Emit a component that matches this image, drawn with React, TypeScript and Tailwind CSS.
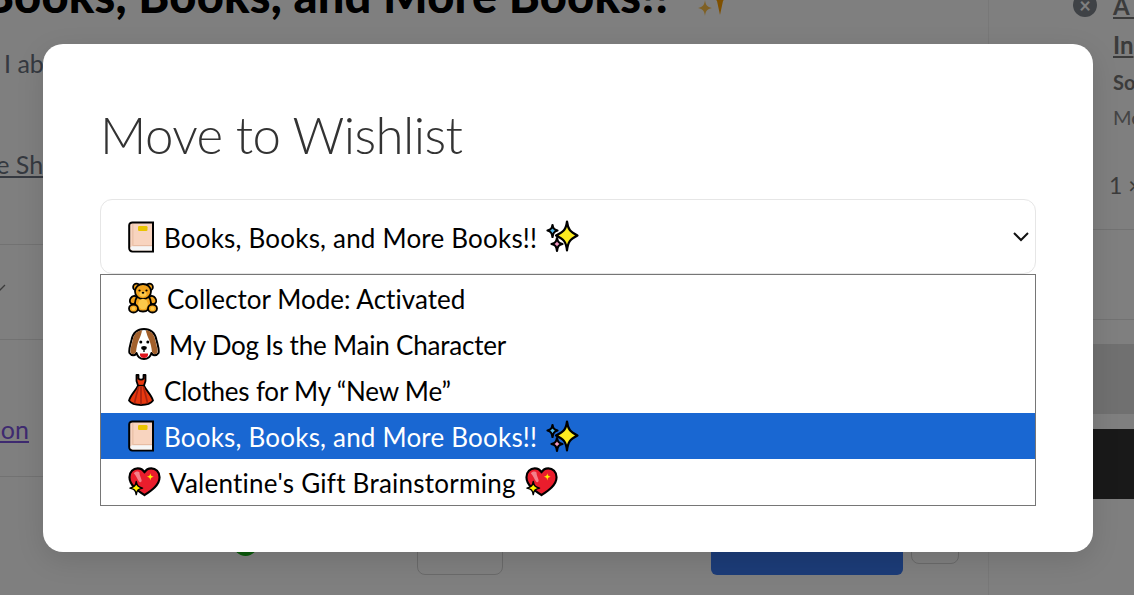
import React from "react";

const Book = () => (
  <svg viewBox="0 0 26 32" className="w-[26px] h-[32px] shrink-0">
    <path d="M4.500 1.500H25V30.500H4.500C2.500 30.500 1.200 29 1.200 27V4.500C1.200 2.700 2.500 1.500 4.500 1.500Z" fill="#f8d4bf" stroke="#000" strokeWidth="2" />
    <path d="M5 25H24V29.500H5C3.500 29.500 2.300 28.500 2.300 27.300C2.300 26 3.500 25 5 25Z" fill="#f6f6f6" />
    <path d="M24 24.700H4.500" stroke="#dcae94" strokeWidth="0.800" />
    <path d="M4.800 3V24.500" stroke="#ecc4ac" strokeWidth="1.600" />
    <rect x="10" y="5" width="9.500" height="5" rx="1.300" fill="#e9c400" />
  </svg>
);

const Sparkles = () => (
  <svg viewBox="0 0 33 33" className="w-[33px] h-[33px] shrink-0">
    <path d="M6.500 5C7 8.500 8 9.500 11.500 10.500C8 11.500 7 13 6.500 17C6 13 5 11.500 1.500 10.500C5 9.500 6 8.500 6.500 5Z" fill="#52b9ec" stroke="#000" strokeWidth="2.200" strokeLinejoin="round" />
    <path d="M21 1.500C22 9.500 24 11.500 31.500 15.500C24 19.500 22 21.500 21 30.500C20 21.500 18 19.500 10 15.500C18 11.500 20 9.500 21 1.500Z" fill="#fcec20" stroke="#000" strokeWidth="2.200" strokeLinejoin="round" />
    <path d="M11 18C11.500 21.500 12.500 23 16.500 24C12.500 25 11.500 26.500 11 31C10.500 26.500 9.500 25 5.500 24C9.500 23 10.500 21.500 11 18Z" fill="#f29ac4" stroke="#000" strokeWidth="2.200" strokeLinejoin="round" />
  </svg>
);

const Teddy = () => (
  <svg viewBox="0 0 30 32" className="w-[30px] h-[32px] shrink-0">
    <g stroke="#000" strokeWidth="1.800" fill="#f2a31c">
      <circle cx="8.500" cy="5" r="3.400" />
      <circle cx="21.500" cy="5" r="3.400" />
      <ellipse cx="5.500" cy="18" rx="3.300" ry="4.300" transform="rotate(35 5.500 18)" />
      <ellipse cx="24.500" cy="18" rx="3.300" ry="4.300" transform="rotate(-35 24.500 18)" />
      <ellipse cx="15" cy="21" rx="8" ry="8.500" />
      <ellipse cx="5.500" cy="26.500" rx="4.500" ry="4" />
      <ellipse cx="24.500" cy="26.500" rx="4.500" ry="4" />
      <ellipse cx="15" cy="9.500" rx="8" ry="7.500" />
    </g>
    <ellipse cx="15" cy="22" rx="4.800" ry="5.200" fill="#fcc94a" />
    <ellipse cx="15" cy="12" rx="3.600" ry="2.800" fill="#fcc94a" />
    <circle cx="11.500" cy="8.500" r="1.100" fill="#000" />
    <circle cx="18.500" cy="8.500" r="1.100" fill="#000" />
    <ellipse cx="15" cy="10.800" rx="1.300" ry="1" fill="#000" />
    <circle cx="5.500" cy="26.500" r="2" fill="#fcc94a" />
    <circle cx="24.500" cy="26.500" r="2" fill="#fcc94a" />
  </svg>
);

const Dog = () => (
  <svg viewBox="0 0 32 32" className="w-[32px] h-[32px] shrink-0">
    <path d="M16 1C23 1 27 5 28.500 12C30 18 31.500 22 30.500 25C28.500 28 25 28 23.500 25C22.500 28.500 19.500 31 16 31C12.500 31 9.500 28.500 8.500 25C7 28 3.500 28 1.500 25C0.500 22 2 18 3.500 12C5 5 9 1 16 1Z" fill="#fff" stroke="#000" strokeWidth="2" strokeLinejoin="round" />
    <path d="M14 2.200C8 3 5.500 7 4.500 13C3 19 2 22 2.700 24.800C4 26.800 7 26.500 8 24C8.500 19 9.500 15 11 11.500C12.500 8 13.500 6 14 2.200Z" fill="#a2602c" />
    <path d="M18 2.200C24 3 26.500 7 27.500 13C29 19 30 22 29.300 24.800C28 26.800 25 26.500 24 24C23.500 19 22.500 15 21 11.500C19.500 8 18.500 6 18 2.200Z" fill="#a2602c" />
    <path d="M18 2.500C24 3 25 9 24 13C22 12 20 8 18 2.500Z" fill="#a2602c" />
    <circle cx="12.800" cy="14" r="1.500" fill="#000" />
    <circle cx="19.800" cy="14" r="1.500" fill="#000" />
    <ellipse cx="16" cy="20" rx="2.800" ry="1.900" fill="#000" />
    <path d="M16 21V24" stroke="#000" strokeWidth="1.300" />
    <path d="M12 25.500H20V27C20 31 12 31 12 27Z" fill="#e0141c" />
  </svg>
);

const Dress = () => (
  <svg viewBox="0 0 26 32" className="w-[26px] h-[32px] shrink-0">
    <path d="M8.500 1V7L10 11.500C7.500 17 2.500 21 1 26.500C3 29.500 7.500 31 13 31C18.500 31 23 29.500 25 26.500C23.500 21 18.500 17 16 11.500L17.500 7V1H15.500V4.500C14.500 6 11.500 6 10.500 4.500V1Z" fill="#e8380f" stroke="#000" strokeWidth="1.800" strokeLinejoin="round" />
    <path d="M10.500 13C9 19 7.500 24 6.500 29.500M13 13V30.500M15.500 13C17 19 18.500 24 19.500 29.500" stroke="#a92410" strokeWidth="1.700" fill="none" />
    <path d="M10 11.500H16" stroke="#000" strokeWidth="1.300" />
  </svg>
);

const Heart = () => (
  <svg viewBox="0 0 34 32" className="w-[33px] h-[32px] shrink-0">
    <path d="M17 29.500C11 25.500 1.500 19.500 1.500 11C1.500 5.500 5.500 2 10 2C13 2 15.500 3.500 17 6C18.500 3.500 21 2 24 2C28.500 2 32.500 5.500 32.500 11C32.500 19.500 23 25.500 17 29.500Z" fill="#ea1d2c" stroke="#000" strokeWidth="2.200" strokeLinejoin="round" />
    <path d="M6 7C8 4.500 11 5 12 6.500C11.500 8 13 11 14 14C14.500 16.500 12 17 11 15C9.500 12.500 8.500 10 6 7Z" fill="#f4808a" />
    <path d="M23 7C23.500 9.500 24 10 26.500 10.500C24 11 23.500 11.500 23 14.500C22.500 11.500 22 11 19.500 10.500C22 10 22.500 9.500 23 7Z" fill="#fff000" />
    <path d="M8.500 15.500C9.300 20 10.500 21.300 15 22.300C10.500 23.300 9.300 24.500 8.500 29C7.700 24.500 6.500 23.300 2 22.300C6.500 21.300 7.700 20 8.500 15.500Z" fill="#fff000" stroke="#000" strokeWidth="1.500" strokeLinejoin="round" />
  </svg>
);

const items = [
  { icon: <Teddy />, label: "Collector Mode: Activated", text: "ml-[9px] tracking-[0.03px]" },
  { icon: <Dog />, label: "My Dog Is the Main Character", text: "ml-[9px] tracking-[-0.2px]" },
  { icon: <Dress />, label: "Clothes for My “New Me”", text: "ml-[10px] tracking-[-0.2px]" },
  { icon: <Book />, label: "Books, Books, and More Books!!", text: "ml-[10px] tracking-[0.2px]", tail: <Sparkles />, selected: true },
  { icon: <Heart />, label: "Valentine's Gift Brainstorming", text: "ml-[8px] tracking-[0.25px]", tail: <Heart /> },
];

export default function App() {
  return (
    <div className="relative h-[595px] w-[1134px] overflow-hidden bg-white font-['Lato','Noto_Sans',sans-serif]">
      <div className="flex h-[595px]">
        <div className="flex w-[989px] shrink-0 flex-col border-r border-[#f0f0f0]">
          <div className="h-[245px] shrink-0 border-b border-[#e5e5e5]">
            <div className="flex h-[44px] -ml-[17px] -mt-[27px] items-start whitespace-nowrap">
              <span className="self-center text-[47px] font-black leading-none tracking-[0.2px] text-black">Books, Books, and More Books!!</span>
              <svg viewBox="0 0 30 44" className="ml-[29px] h-[44px] w-[30px] shrink-0">
                <path d="M7 27C7.700 32 9 34 14 35C9 36 7.700 38 7 43C6.300 38 5 36 0 35C5 34 6.300 32 7 27Z" fill="#ffc24a" />
                <path d="M14 22H30L25 28C24 33 23 37 22 42C21 37 20 33 19 28Z" fill="#ffa000" />
              </svg>
            </div>
            <div className="ml-[4px] mt-[30px] whitespace-nowrap text-[25px] leading-8 text-[#6b7280]">I about this list</div>
            <div className="-ml-[53px] mt-[69px] whitespace-nowrap text-[25px] leading-8 text-[#6b7280] underline">Move Shopping</div>
          </div>
          <div className="flex h-[95px] shrink-0 items-center border-b border-[#e5e5e5] pb-[9px]">
            <svg viewBox="0 0 10 10" className="-ml-[4px] h-[10px] w-[10px]" fill="none" stroke="#777" strokeWidth="1.300">
              <path d="M1 2L4 7L9 2" />
            </svg>
          </div>
          <div className="flex h-[136px] w-[29px] shrink-0 items-center justify-end whitespace-nowrap pt-[44px] text-[25px] text-[#7c55e0] underline">
            Description
          </div>
          <div className="flex flex-1 items-start border-t border-[#e5e5e5]">
            <div className="ml-[233px] mt-[54px] h-[25px] w-[25px] shrink-0 rounded-full bg-[#16b516]" />
            <div className="ml-[159px] mt-[39px] h-[59px] w-[86px] shrink-0 rounded-lg border border-[#d4d4d4]" />
            <div className="ml-[208px] mt-[39px] h-[59px] w-[192px] shrink-0 rounded-md bg-[#3878f0]" />
            <div className="ml-[8px] mt-[39px] h-[48px] w-[48px] shrink-0 rounded-lg border border-[#d4d4d4]" />
          </div>
        </div>
        <div className="min-w-0 flex-1 whitespace-nowrap">
          <div className="flex h-[230px] flex-col border-b border-[#e5e5e5] pl-[124px]">
            <div className="relative -mt-[6px] h-[24px] text-[24px] font-bold leading-[24px] text-[#777] underline">
              <span className="absolute -left-[40px] top-[-1px] flex h-6 w-6 items-center justify-center rounded-full bg-[#7e848c] text-[20px] font-bold text-white no-underline">×</span>
              A list
            </div>
            <div className="mt-[12px] text-[24px] font-bold leading-[30px] text-[#777] underline">In</div>
            <div className="mt-[10px] text-[20px] font-bold leading-[24px] text-[#777]">So</div>
            <div className="mt-[11px] text-[20px] leading-[24px] text-[#888]">Mo</div>
            <div className="-ml-[4px] mt-[41px] text-[23px] leading-[30px] text-[#777]">1 ×</div>
          </div>
          <div className="h-[90px] border-b border-[#e5e5e5]" />
          <div className="mt-[24px] h-[70px] bg-[#e0e0e0]" />
          <div className="mt-[15px] h-[70px] bg-[#333]" />
        </div>
      </div>

      <div className="absolute inset-0 bg-black/50">
        <div className="ml-[43px] mt-[44px] h-[508px] w-[1050px] rounded-[20px] bg-white px-[57px] pt-[49px] shadow-[0_8px_28px_rgba(0,0,0,0.12)]">
          <h2 className="whitespace-nowrap text-[51px] font-light leading-[84px] tracking-[-0.6px] text-[#333]">Move to Wishlist</h2>
          <div className="mt-[22px] flex h-[75px] items-center whitespace-nowrap rounded-xl border border-[#e6e6e6] pl-[27px] pr-[6px] text-[26px] text-black">
            <Book />
            <span className="ml-[10px] pt-[3px] tracking-[0.2px]">Books, Books, and More Books!!</span>
            <span className="ml-[9px]"><Sparkles /></span>
            <svg viewBox="0 0 16 16" className="ml-auto h-4 w-4" fill="none" stroke="#111" strokeWidth="2">
              <path d="M1 4L8 11L15 4" />
            </svg>
          </div>
          <ul className="whitespace-nowrap border border-[#767676] text-[26px] text-black">
            {items.map((it) => (
              <li
                key={it.label}
                className={`flex h-[46px] items-center pl-[27px] ${it.selected ? "bg-[#1967d2] text-white" : ""}`}
              >
                {it.icon}
                <span className={`${it.text} pt-[3px]`}>{it.label}</span>
                {it.tail && <span className="ml-[9px]">{it.tail}</span>}
              </li>
            ))}
          </ul>
        </div>
      </div>
    </div>
  );
}
